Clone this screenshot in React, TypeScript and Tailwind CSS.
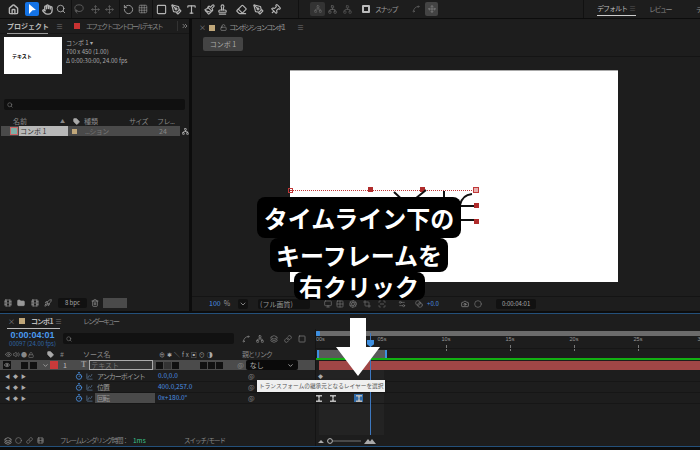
import React from "react";
import { Home, Hand, Search, RotateCcw, Move, Square, PenTool, Type, Paintbrush, Stamp, Eraser, Pin, Folder, Trash2, Camera, Network, Film, ChevronDown, Eye, Volume2, Lock, LockOpen, Tag, Timer, ChartSpline, Spline, Link, ChevronsRight, Layers, Circle, Lasso, Grid3x3, Monitor, Grid2x2, Aperture, Settings2, Crop, ScanLine, Blend, Rocket } from "lucide-react";

const jp = "font-['Noto_Sans_CJK_JP','Noto_Sans',sans-serif]";

function Menu({ className = "ml-2" }: { className?: string }) {
  return <span className={`text-[#777] text-[7px] leading-none shrink-0 ${className}`}>≡</span>;
}

function Sep({ className }: { className: string }) {
  return <div className={`w-px h-[18px] bg-[#111] shrink-0 ${className}`} />;
}

function Toolbar() {
  const I = "text-[#b5b5b5] shrink-0";
  const D = "text-[#666] shrink-0";
  return (
    <div className="h-[18px] bg-[#1d1d1d] flex items-center shrink-0 text-[#b5b5b5] overflow-hidden">
      <Home size={11} className={`${I} ml-[8px]`} strokeWidth={3} />
      <div className="ml-[6px] w-[14px] h-[14px] bg-[#1473e6] rounded-[2px] flex items-center justify-center shrink-0">
        <svg width="9" height="11" viewBox="0 0 9 11"><path d="M1 0 L8 6 L4.5 6.2 L1 10 Z" fill="#fff" /></svg>
      </div>
      <Hand size={11} className={`${I} ml-[3px]`} strokeWidth={3} />
      <Search size={10} className={`${I} ml-[3px]`} />
      <Sep className="ml-[5px]" />
      <Lasso size={10} className={`${D} ml-[2px]`} />
      <Move size={9} className={`${D} ml-[7px]`} />
      <Move size={9} className={`${D} ml-[5px]`} />
      <Sep className="ml-[5px]" />
      <RotateCcw size={11} className="text-[#a0a0a0] ml-[3px] shrink-0" />
      <Grid3x3 size={10} className="text-[#888] ml-[4px] shrink-0" strokeDasharray="2 2" />
      <Sep className="ml-[4px]" />
      <Square size={11} className={`${I} ml-[3px]`} strokeWidth={2.5} />
      <PenTool size={11} className={`${I} ml-[4px]`} strokeWidth={2.5} />
      <Type size={11} className={`${I} ml-[4px]`} strokeWidth={2.5} />
      <Sep className="ml-[3px]" />
      <Paintbrush size={11} className={`${I} ml-[3px]`} strokeWidth={2.5} />
      <Stamp size={11} className={`${I} ml-[2px]`} strokeWidth={2.5} />
      <Eraser size={11} className={`${I} ml-[8px]`} strokeWidth={2.5} />
      <PenTool size={11} className={`${I} ml-[6px]`} strokeWidth={2.5} />
      <Pin size={11} className={`${I} ml-[6px] rotate-45`} strokeWidth={2.5} />
      <Sep className="ml-[17px]" />
      <div className="ml-[11px] w-[15px] h-[14px] bg-[#333] rounded-[2px] flex items-center justify-center shrink-0">
        <Network size={8} className="text-[#666]" />
      </div>
      <Network size={9} className={`${D} ml-[3px]`} />
      <Network size={9} className="text-[#555] ml-[6px] shrink-0" />
      <div className="ml-[10px] w-[8px] h-[8px] border-2 border-[#bbb] rounded-[1px] shrink-0" />
      <span className={`${jp} text-[7px] text-[#999] ml-[5px] tracking-[-1.5px] whitespace-nowrap w-[22px] shrink-0`}>スナップ</span>
      <Spline size={8} className={`${D} ml-[15px]`} />
      <div className="ml-[5px] w-[13px] h-[14px] bg-[#444] rounded-[2px] flex items-center justify-center shrink-0">
        <Move size={8} className="text-[#888]" />
      </div>
      <Sep className="ml-[145px]" />
      <div className={`${jp} ml-[13px] text-[7px] text-[#bbb] border-b border-[#ccc] h-[14px] leading-[13px] w-[39px] flex justify-between shrink-0 whitespace-nowrap`}>
        <span className="tracking-[-1px]">デフォルト</span><span className="text-[#555]">≡</span>
      </div>
      <span className={`${jp} ml-[13px] text-[7px] text-[#888] tracking-[-1.5px] whitespace-nowrap w-[20px] shrink-0`}>レビュー</span>
      <span className={`${jp} ml-[27px] text-[7px] text-[#888] whitespace-nowrap`}>デ</span>
    </div>
  );
}

function ProjectPanel() {
  return (
    <div className={`${jp} w-[189px] h-full bg-[#1d1d1d] flex flex-col shrink-0 text-[#999]`}>
      <div className="h-[15px] flex items-center relative border-b border-[#161616]">
        <div className="ml-[7px] w-[41px] h-[15px] border-b border-[#999] text-[7px] font-bold text-[#bbb] leading-[14px] whitespace-nowrap shrink-0">プロジェクト</div>
        <Menu />
        <div className="ml-[11px] w-[6px] h-[6px] bg-[#c83232] shrink-0" />
        <span className="ml-[6px] w-[77px] text-[7px] whitespace-nowrap text-[#888] tracking-[-1.9px] shrink-0">エフェクトコントロール テキスト</span>
        <div className="ml-[14px] w-px h-[10px] bg-[#333] shrink-0" />
        <ChevronsRight size={8} className="text-[#aaa] ml-[3px] shrink-0" />
      </div>
      <div className="flex mt-[3px] h-[38px]">
        <div className="ml-[4px] w-[58px] h-[37px] bg-white flex items-center">
          <span className="ml-[8px] text-[5px] font-bold text-black">テキスト</span>
        </div>
        <div className="ml-[4px] text-[6px] leading-[9px] mt-[1px] text-[#aaa]">
          <div>コンポ 1 ▾</div>
          <div>700 x 450 (1.00)</div>
          <div>Δ 0:00:30:00, 24.00 fps</div>
        </div>
      </div>
      <div className="mt-[24px] mx-[4px] h-[11px] rounded-[2px] bg-[#101010] flex items-center pl-[3px] w-[181px]">
        <Search size={6} className="text-[#888]" />
      </div>
      <div className="mt-[6px] h-[10px] flex items-center text-[7px] text-[#888]">
        <span className="ml-[13px] w-[47px]">名前</span>
        <span className="w-[10px] text-[5px]">▲</span>
        <Tag size={7} className="ml-[3px] text-[#aaa]" fill="#aaa" />
        <span className="ml-[4px] w-[45px]">種類</span>
        <span className="w-[28px] tracking-[-0.7px] whitespace-nowrap">サイズ</span>
        <span className="whitespace-nowrap tracking-[-0.5px]">フレ...</span>
      </div>
      <div className="h-[10px] flex items-center text-[7px]">
        <div className="w-[179px] ml-px h-full bg-[#4a4a4a] flex items-center">
          <div className="ml-[9px] w-[8px] h-[8px] bg-[#7fb0a8] border border-[#c66] shrink-0" />
          <div className="ml-[1px] w-[49px] h-full bg-[#b8b8b8] text-[#333] leading-[10px] pl-px shrink-0">コンポ 1</div>
          <div className="ml-[4px] w-[5px] h-[5px] bg-[#c0a77a] shrink-0" />
          <span className="ml-[8px] w-[74px] text-[#777] tracking-[-0.5px] shrink-0 whitespace-nowrap">...ション</span>
          <span className="text-[#888]">24</span>
        </div>
        <Network size={7} className="text-[#ccc] ml-[2px]" />
      </div>
      <div className="flex-1" />
      <div className="h-[12px] flex items-center mb-[2px] text-[#999]">
        <Film size={8} className="ml-[4px] shrink-0" />
        <Folder size={8} className="ml-[5px] shrink-0" fill="#999" />
        <Film size={8} className="ml-[6px] shrink-0" />
        <Rocket size={8} className="ml-[5px] shrink-0" />
        <span className="ml-[6px] w-[29px] h-[10px] rounded-[2px] bg-[#111] text-[6px] text-[#aaa] text-center leading-[10px] shrink-0">8 bpc</span>
        <Trash2 size={8} className="ml-[4px] shrink-0" />
        <div className="ml-[4px] w-[24px] h-[10px] bg-[#4a4a4a] shrink-0" />
      </div>
    </div>
  );
}

function CompPanel() {
  const B = "text-[#777] shrink-0";
  return (
    <div className={`${jp} flex-1 h-full bg-[#1d1d1d] flex flex-col text-[#999] min-w-0`}>
      <div className="h-[17px] flex items-center text-[7px]">
        <span className="ml-[7px] text-[#888]">×</span>
        <div className="ml-[3px] w-[6px] h-[6px] bg-[#c0a77a] shrink-0" />
        <LockOpen size={7} className="ml-[5px] text-[#999] shrink-0" />
        <span className="ml-[2px] w-[60px] text-[#999] whitespace-nowrap tracking-[-1.7px] shrink-0">コンポジション コンボ 1</span>
        <Menu />
      </div>
      <div className="h-[20px] flex items-start">
        <div className="ml-[11px] mt-[1px] w-[40px] h-[14px] rounded-[2px] bg-[#444] text-[7px] text-[#aaa] text-center leading-[14px]">コンボ 1</div>
      </div>
      <div className="h-px bg-[#141414]" />
      <div className="flex-1 relative">
        <div className="absolute left-[98px] top-[13px] w-[328px] h-[212px] bg-white border-t border-[#aaa]">
          <div className="absolute left-0 top-[119px] w-[188px] border-t border-dotted border-[#c03838]" />
          <div className="absolute left-[-2px] top-[117px] w-[5px] h-[5px] border border-[#c03838]" />
          <div className="absolute left-[78px] top-[116px] w-[5px] h-[5px] bg-[#b02c2c]" />
          <div className="absolute left-[130px] top-[116px] w-[5px] h-[5px] bg-[#b02c2c]" />
          <div className="absolute left-[183px] top-[116px] w-[6px] h-[6px] bg-[#e8b0b0] border border-[#c03838]" />
          <div className="absolute left-[184px] top-[132px] w-[5px] h-[5px] bg-[#b02c2c]" />
          <div className="absolute left-[184px] top-[148px] w-[5px] h-[5px] bg-[#b02c2c]" />
          <svg className="absolute left-[90px] top-[116px]" width="100" height="44" viewBox="0 0 100 44" fill="none" stroke="#111" strokeWidth="2">
            <path d="M14 5 L28 18 M46 3 L30 16 M64 4 L64 22 M92 7 Q82 8 80 18 M76 19 L94 19 M76 33 L94 33" />
          </svg>
        </div>
      </div>
      <div className="h-[14px] flex items-center border-t border-[#141414] text-[7px] mb-[1px]">
        <span className="ml-[17px] text-[#4a90e2] shrink-0">100</span>
        <span className="ml-[3px] shrink-0">%</span>
        <ChevronDown size={10} className="ml-[8px] p-px bg-[#111] rounded-[2px] text-[#bbb] shrink-0" />
        <div className="ml-[10px] w-[52px] h-[10px] bg-[#111] rounded-[2px] text-[#999] leading-[10px] pl-[2px] whitespace-nowrap shrink-0">(フル画質)</div>
        <Monitor size={8} className={`${B} ml-[14px]`} />
        <Grid2x2 size={8} className={`${B} ml-[4px]`} />
        <Aperture size={8} className={`${B} ml-[5px]`} />
        <Crop size={8} className={`${B} ml-[6px]`} />
        <ScanLine size={8} className={`${B} ml-[7px]`} />
        <Settings2 size={8} className={`${B} ml-[12px]`} />
        <Blend size={8} className={`${B} ml-[9px]`} />
        <span className="ml-[4px] w-[13px] text-[#4a90e2] text-[6px] shrink-0">+0.0</span>
        <Camera size={8} className="text-[#999] ml-[21px] shrink-0" />
        <Circle size={8} className="text-[#777] ml-[5px] shrink-0" />
        <div className="ml-[14px] w-[40px] h-[10px] bg-[#111] rounded-[2px] text-[6px] text-[#aaa] text-center leading-[10px] shrink-0">0:00:04:01</div>
      </div>
    </div>
  );
}

function PropRow({ name, value, highlight }: { name: string; value: string; highlight?: boolean }) {
  return (
    <div className="h-[11px] flex items-center border-b border-[#161616] text-[7px]">
      <span className="ml-[5px] w-[25px] text-[#aaa] text-[5px] tracking-[3px] whitespace-nowrap shrink-0">◀◆▶</span>
      <div className="w-[45px] shrink-0" />
      <Timer size={8} className="text-[#4a90e2] shrink-0" strokeWidth={2.5} />
      <ChartSpline size={7} className="ml-[3px] text-[#6a8fb8] shrink-0" />
      <div className={`ml-[2px] w-[60px] h-[10px] leading-[10px] pl-[2px] text-[#999] whitespace-nowrap shrink-0 tracking-[-1px] ${highlight ? "bg-[#4a4a4a]" : ""}`}>{name}</div>
      <span className="ml-[3px] w-[90px] text-[#4a90e2] text-[6.5px] whitespace-nowrap shrink-0">{value}</span>
      <span className="text-[#888] text-[7px]">@</span>
    </div>
  );
}

function Hourglass() {
  return (
    <svg width="6" height="7" viewBox="0 0 6 7" className="shrink-0">
      <path d="M0 0 H6 V1.5 H4 L3.5 3.5 L4 5.5 H6 V7 H0 V5.5 H2 L2.5 3.5 L2 1.5 H0 Z" fill="#bbb" />
    </svg>
  );
}

function Timeline() {
  return (
    <div className={`${jp} mt-[2px] h-[134px] bg-[#1d1d1d] border-y border-[#24507a] flex flex-col relative shrink-0 text-[#999]`}>
      <div className="h-[15px] flex items-center text-[7px]">
        <div className="ml-[7px] w-[53px] h-[15px] border-b border-[#bbb] flex items-center shrink-0">
          <span className="ml-px text-[#888]">×</span>
          <div className="ml-[4px] w-[6px] h-[6px] bg-[#c0a77a] shrink-0" />
          <span className="ml-[6px] w-[22px] text-[#bbb] font-bold whitespace-nowrap tracking-[-1px] shrink-0">コンボ 1</span>
          <Menu className="ml-[2px]" />
        </div>
        <span className="ml-[23px] text-[#888] tracking-[-2px] whitespace-nowrap">レンダーキュー</span>
      </div>
      <div className="flex flex-1 min-h-0">
        <div className="w-[316px] shrink-0 flex flex-col border-r border-[#141414]">
          <div className="h-[19px] flex items-center">
            <div className="ml-[7px] w-[51px] text-center shrink-0">
              <div className="text-[9px] leading-[9px] font-bold text-[#4a9bf0] font-['Liberation_Sans',sans-serif]">0:00:04:01</div>
              <div className="text-[6px] leading-[7px] text-[#2f66a8] whitespace-nowrap">00097 (24.00 fps)</div>
            </div>
            <div className="ml-[5px] w-[171px] h-[11px] bg-[#111] rounded-[2px] flex items-center pl-[3px] shrink-0">
              <Search size={6} className="text-[#888]" />
            </div>
            <Spline size={8} className="ml-[8px] text-[#888] shrink-0" />
            <Network size={8} className="ml-[6px] text-[#888] shrink-0" />
            <Layers size={8} className="ml-[6px] text-[#888] shrink-0" />
            <Link size={8} className="ml-[6px] text-[#888] shrink-0" />
            <Square size={8} className="ml-[6px] text-[#888] shrink-0" />
          </div>
          <div className="h-[11px] mt-px flex items-center text-[7px] text-[#888]">
            <Eye size={7} className="ml-[5px] shrink-0" /><Volume2 size={7} className="ml-px shrink-0" />
            <span className="ml-px text-[6px]">●</span><Lock size={6} className="ml-px shrink-0" />
            <Tag size={7} className="ml-[13px] text-[#aaa] shrink-0" fill="#aaa" />
            <span className="ml-[6px]">#</span>
            <span className="ml-[19px] w-[76px] shrink-0">ソース名</span>
            <span className="w-[83px] text-[6px] tracking-[2px] whitespace-nowrap text-[#aaa] shrink-0">⊕✱＼fx▣⊙◑</span>
            <span className="whitespace-nowrap tracking-[-1px]">親とリンク</span>
          </div>
          <div className="h-[10px] bg-[#4b4b4b] flex items-center text-[7px]">
            <div className="ml-[3px] w-[8px] h-[8px] bg-[#111] flex items-center justify-center shrink-0"><Eye size={6} className="text-[#bbb]" /></div>
            <div className="ml-[10px] w-[7px] h-[7px] bg-[#111] shrink-0" />
            <div className="ml-[2px] w-[7px] h-[7px] bg-[#111] shrink-0" />
            <ChevronDown size={7} className="ml-[5px] text-[#ccc] shrink-0" />
            <div className="ml-px w-[8px] h-[8px] bg-[#c83a3a] shrink-0" />
            <span className="ml-[5px] text-[#bbb]">1</span>
            <span className="ml-[14px] font-['Liberation_Serif',serif] font-bold text-[#999] text-[8px]">T</span>
            <div className="ml-[3px] w-[64px] h-[10px] bg-[#333] border border-[#aaa] leading-[8px] pl-px text-[#777] shrink-0">テキスト</div>
            <div className="ml-[3px] w-[7px] h-[7px] bg-[#111] shrink-0" />
            <div className="ml-px w-[7px] h-[7px] bg-[#333] shrink-0" />
            <div className="ml-px w-[7px] h-[7px] bg-[#111] shrink-0" />
            <div className="ml-[21px] w-[7px] h-[7px] bg-[#111] shrink-0" />
            <div className="ml-px w-[7px] h-[7px] bg-[#111] shrink-0" />
            <div className="ml-px w-[7px] h-[7px] bg-[#111] shrink-0" />
            <span className="ml-[14px] text-[#888]">@</span>
            <div className="ml-[2px] w-[52px] h-[10px] bg-[#0a0a0a] rounded-[2px] flex items-center justify-between px-[4px] text-[#aaa] shrink-0">
              なし<ChevronDown size={7} strokeWidth={3} />
            </div>
          </div>
          <div className="h-px" />
          <PropRow name="アンカーポイント" value="0.0,0.0" />
          <PropRow name="位置" value="400.0,257.0" />
          <PropRow name="回転" value="0x+180.0°" highlight />
          <div className="flex-1" />
          <div className="h-[11px] flex items-center text-[7px] text-[#888]">
            <Layers size={8} className="ml-[4px] text-[#aaa] shrink-0" />
            <Circle size={7} className="ml-[3px] shrink-0" />
            <Link size={7} className="ml-[4px] shrink-0" />
            <Film size={7} className="ml-[4px] shrink-0" />
            <span className="ml-[16px] w-[73px] text-[6.5px] tracking-[-1.3px] whitespace-nowrap shrink-0">フレームレンダリング時間：</span>
            <span className="text-[#3bc48c] text-[6.5px] w-[12px] shrink-0">1ms</span>
            <span className="ml-[39px] text-[6.5px] tracking-[-1px] whitespace-nowrap">スイッチ / モード</span>
          </div>
        </div>
        <div className="flex-1 flex flex-col relative min-w-0 overflow-hidden">
          <div className="h-[2px] shrink-0" />
          <div className="h-[5px] bg-[#6b6b6b] flex shrink-0">
            <div className="w-[4px] h-[5px] bg-[#3d8fe0] rounded-[1px]" />
          </div>
          <div className="h-[12px] flex items-start text-[5.5px] text-[#999] font-['Liberation_Sans',sans-serif] shrink-0">
            {["00s", "05s", "10s", "15s", "20s", "25s", "30s"].map((t, i) => (
              <div key={t} className={`shrink-0 ${i === 0 ? "w-[34px] text-left" : "w-[64px] text-center"}`}>
                <div className="leading-[7px]">{t}</div>
                {i > 1 && <div className="w-px h-[6px] bg-[#777] mx-auto mt-[2px]" />}
              </div>
            ))}
          </div>
          <div className="h-[13px] pt-[1px] flex items-start border-t border-[#161616] shrink-0">
            <div className="ml-px w-[70px] h-[8px] bg-[#5a5a5a] border-x-2 border-[#3d8fe0]" />
          </div>
          <div className="absolute left-0 right-0 top-[29px] h-[2px] bg-[#12b012]" />
          <div className="h-[9px] ml-[3px] bg-[#a04646] shrink-0" />
          <div className="flex-1 relative min-h-0">
            <div className="absolute left-[3px] top-0 bottom-0 w-[65px] bg-[#232323]" />
            <div className="relative h-px" />
            <div className="relative h-[11px] flex items-center border-b border-[#161616] text-[5px] text-[#aaa]">
              <span className="ml-[2px]">◆</span>
            </div>
            <div className="relative h-[11px] border-b border-[#161616]" />
            <div className="relative h-[11px] flex items-center border-b border-[#161616]">
              <div className="ml-[0px]"><Hourglass /></div>
              <div className="ml-[8px]"><Hourglass /></div>
              <span className="ml-[18px] w-[9px] h-[8px] bg-[#2f6aa8] flex items-center justify-center shrink-0">
                <Hourglass />
              </span>
            </div>
          </div>
          <div className="absolute left-[54px] top-[4px] bottom-[11px] w-px bg-[#3d78c0]" />
          <div className="absolute left-[51px] top-[11px] w-[7px] h-[7px] bg-[#3d8fe0] [clip-path:polygon(0_0,100%_0,100%_60%,50%_100%,0_60%)]" />
          <div className="h-[11px] flex items-center ml-[2px] text-[#aaa] shrink-0">
            <svg width="64" height="8" viewBox="0 0 64 8">
              <path d="M0 6 L3 3 L6 6 Z M46 7 L50 2 L52 4.5 L54 2 L58 7 Z" fill="#aaa" />
              <circle cx="12" cy="4" r="2.4" fill="none" stroke="#bbb" />
              <line x1="15" y1="4" x2="43" y2="4" stroke="#777" />
            </svg>
          </div>
        </div>
      </div>
    </div>
  );
}

export default function App() {
  return (
    <div className="relative w-[700px] h-[450px] overflow-hidden bg-[#0c0c0c] flex flex-col">
      <Toolbar />
      <div className="h-[292px] mt-px flex gap-[3px] shrink-0">
        <ProjectPanel />
        <CompPanel />
      </div>
      <Timeline />

      <div className={`${jp} absolute left-[257px] top-[197px] w-[204px] flex flex-col items-center text-white font-bold text-[24px]`}>
        <div className="h-[41px] w-[204px] bg-black rounded-[8px] text-center leading-[41px] whitespace-nowrap">タイムライン下の</div>
        <div className="h-[34px] w-[178px] bg-black rounded-[8px] text-center leading-[34px] whitespace-nowrap">キーフレームを</div>
        <div className="h-[28px] w-[131px] bg-black rounded-[8px] text-center leading-[28px] whitespace-nowrap">右クリック</div>
      </div>

      <svg className="absolute left-[336px] top-[318px]" width="44" height="58" viewBox="0 0 44 58">
        <path d="M14 0 H30 V29 H44 L22 58 L0 29 H14 Z" fill="#fff" />
      </svg>

      <div className={`${jp} absolute left-[257px] top-[380px] w-[128px] h-[12px] bg-[#efefef] text-[#555] text-[5.7px] leading-[12px] pl-[2px] whitespace-nowrap overflow-hidden shadow`}>
        トランスフォームの継承元となるレイヤーを選択
      </div>
    </div>
  );
}
